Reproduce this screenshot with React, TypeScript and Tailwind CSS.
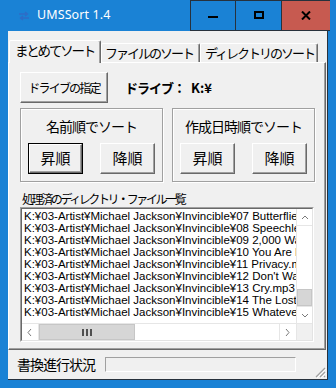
const prefix = "K:¥03-Artist¥Michael Jackson¥Invincible¥";
const files = [
  "07 Butterflies.mp3",
  "08 Speechless.mp3",
  "09 2,000 Watts.mp3",
  "10 You Are My Life.mp3",
  "11 Privacy.mp3",
  "12 Don't Walk Away.mp3",
  "13 Cry.mp3",
  "14 The Lost Children.mp3",
  "15 Whatever Happens.mp3",
];

function Btn({ label, w, def, textCls }: { label: string; w: string; def?: boolean; textCls: string }) {
  return (
    <div className={`${w} h-[31px] ${def ? "border border-black" : ""}`}>
      <div className="h-full flex items-center justify-center border-t border-l border-white border-r border-b border-r-[#696969] border-b-[#696969] shadow-[inset_-1px_-1px_0_#a0a0a0]">
        <span className={textCls}>{label}</span>
      </div>
    </div>
  );
}

function Chevron({ dir }: { dir: "up" | "down" | "left" | "right" }) {
  const d = {
    up: "M2 6 L5 3 L8 6",
    down: "M2 3 L5 6 L8 3",
    left: "M6 1 L3 4.5 L6 8",
    right: "M3 1 L6 4.5 L3 8",
  }[dir];
  return (
    <svg width="10" height="9" viewBox="0 0 10 9">
      <path d={d} fill="none" stroke="#7a7a7a" strokeWidth="1" />
    </svg>
  );
}

function SortGroup({ title, def }: { title: string; def?: boolean }) {
  return (
    <div className="w-[143px] h-[74px] border border-[#a0a0a0] shadow-[inset_1px_1px_0_#fff,1px_1px_0_#fff] flex flex-col">
      <div className="h-[34px] flex items-center justify-center text-[14px] tracking-[-1px] text-black">{title}</div>
      <div className="flex justify-between px-[7px]">
        <Btn label="昇順" w="w-[55px]" def={def} textCls="text-[15px]" />
        <Btn label="降順" w="w-[55px]" textCls="text-[15px]" />
      </div>
    </div>
  );
}

export default function App() {
  return (
    <div className="w-[336px] h-[388px] bg-[#1a82d5] flex flex-col overflow-hidden font-['Noto_Sans_CJK_JP',sans-serif]">
      {/* title bar */}
      <div className="h-[31px] flex relative">
        <div className="w-[190px] flex items-center">
          <svg className="ml-[18px]" width="12" height="10" viewBox="0 0 12 10">
            <path d="M1 3 H9 M7 1 L9.5 3 L7 5 M11 7 H3 M5 5 L2.5 7 L5 9" fill="none" stroke="#2f6cc6" strokeWidth="1.3" />
          </svg>
          <span className="ml-[7px] text-white text-[12.5px] font-['Noto_Sans',sans-serif] tracking-[0.1px]">UMSSort 1.4</span>
        </div>
        <div className="flex h-[31px] border-t border-b border-l border-[#27313c]">
          <div className="w-[45px] border-r border-[#27313c] flex items-center justify-center">
            <div className="w-[10px] h-[2px] bg-black mt-[3px]" />
          </div>
          <div className="w-[46px] border-r border-[#27313c] flex items-center justify-center">
            <div className="w-[10px] h-[8px] border-2 border-black -mt-[1px]" />
          </div>
          <div className="w-[48px] bg-[#c75a50] flex items-center justify-center">
            <svg width="10" height="9" viewBox="0 0 10 9">
              <path d="M1 0.5 L9 8.5 M9 0.5 L1 8.5" stroke="#000" strokeWidth="2" />
            </svg>
          </div>
        </div>
      </div>

      {/* client */}
      <div className="mx-[8px] mb-[8px] flex-1 bg-[#f0f0f0] flex flex-col border-r border-b border-[#27313c]">
        {/* tabs */}
        <div className="h-[31px] flex items-end pl-[1px] text-[13px] tracking-[-2px] text-black">
          <div className="relative z-10 w-[92px] h-[23px] -mb-px bg-[#f0f0f0] border-t border-l border-white border-r border-r-[#696969] shadow-[inset_-1px_0_0_#a0a0a0] rounded-t-[2px] flex items-center pl-[5px] pb-[3px] text-[13.5px] tracking-[-2.2px]">
            まとめてソート
          </div>
          <div className="w-[99px] h-[19px] border-t border-l border-white border-r border-r-[#696969] shadow-[inset_-1px_0_0_#a0a0a0] rounded-t-[2px] flex items-center pl-[3px]">
            ファイルのソート
          </div>
          <div className="w-[118px] h-[19px] border-t border-l border-white border-r border-r-[#696969] shadow-[inset_-1px_0_0_#a0a0a0] rounded-t-[2px] flex items-center pl-[4px]">
            ディレクトリのソート
          </div>
        </div>

        {/* panel */}
        <div className="w-[318px] h-[288px] border-t border-l border-white border-r border-b border-r-[#696969] border-b-[#696969] shadow-[inset_-1px_-1px_0_#a0a0a0] pl-[11px] pt-[9px] flex flex-col text-black">
          <div className="flex items-center">
            <Btn label="ドライブの指定" w="w-[88px]" textCls="text-[12px] tracking-[-1.8px]" />
            <span className="ml-[17px] text-[13px] font-bold tracking-[-1px]">ドライブ：</span>
            <span className="ml-[6px] text-[13px] font-bold">K:¥</span>
          </div>

          <div className="flex gap-[9px] mt-[5px]">
            <SortGroup title="名前順でソート" def />
            <SortGroup title="作成日時順でソート" />
          </div>

          <div className="mt-[8px] ml-[2px] h-[17px] text-[12px] tracking-[-2.4px] leading-[17px]">処理済のディレクトリ・ファイル一覧</div>

          {/* list box */}
          <div className="w-[294px] h-[135px] border-t border-l border-[#a0a0a0] border-r border-b border-r-white border-b-white">
            <div className="h-full border-t border-l border-[#696969] border-r border-b border-r-[#e3e3e3] border-b-[#e3e3e3] bg-white flex flex-col">
              <div className="flex flex-1 min-h-0">
                <div className="flex-1 overflow-hidden pl-[2px] pt-[1px] font-['Liberation_Sans',sans-serif] text-[11.5px] leading-[12px] whitespace-nowrap">
                  {files.map((f) => (
                    <div key={f}>{prefix + f}</div>
                  ))}
                </div>
                {/* vertical scrollbar */}
                <div className="w-[16px] flex flex-col border-l border-[#e6e6e6]">
                  <div className="h-[17px] flex items-center justify-center border-b border-[#e6e6e6]">
                    <Chevron dir="up" />
                  </div>
                  <div className="flex-1 flex flex-col justify-end">
                    <div className="h-[17px] bg-[#d6d6d6] border border-[#c6c6c6]" />
                  </div>
                  <div className="h-[17px] flex items-center justify-center border-t border-[#e6e6e6]">
                    <Chevron dir="down" />
                  </div>
                </div>
              </div>
              {/* horizontal scrollbar */}
              <div className="h-[17px] flex border-t border-[#e6e6e6]">
                <div className="w-[17px] flex items-center justify-center border-r border-[#e6e6e6]">
                  <Chevron dir="left" />
                </div>
                <div className="w-[96px] bg-[#d6d6d6] border border-[#c6c6c6] flex items-center justify-center gap-[2px]">
                  <div className="w-[2px] h-[7px] bg-[#505050]" />
                  <div className="w-[2px] h-[7px] bg-[#505050]" />
                  <div className="w-[2px] h-[7px] bg-[#505050]" />
                </div>
                <div className="flex-1" />
                <div className="w-[17px] flex items-center justify-center border-l border-[#e6e6e6]">
                  <Chevron dir="right" />
                </div>
                <div className="w-[16px] bg-[#f0f0f0] border-l border-[#e6e6e6]" />
              </div>
            </div>
          </div>
        </div>

        {/* status */}
        <div className="flex-1 flex items-center relative">
          <span className="ml-[9px] text-[14px] tracking-[-1px] text-black">書換進行状況</span>
          <div className="ml-[10px] w-[191px] h-[15px] border-t border-l border-[#a0a0a0] border-r border-b border-r-white border-b-white" />
          <svg className="absolute right-[1px] bottom-[1px]" width="12" height="12" viewBox="0 0 12 12">
            <path d="M11 2 L2 11 M11 6 L6 11 M11 10 L10 11" stroke="#a0a0a0" strokeWidth="1.2" />
            <path d="M12 3 L3 12 M12 7 L7 12" stroke="#fff" strokeWidth="1" />
          </svg>
        </div>
      </div>
    </div>
  );
}
